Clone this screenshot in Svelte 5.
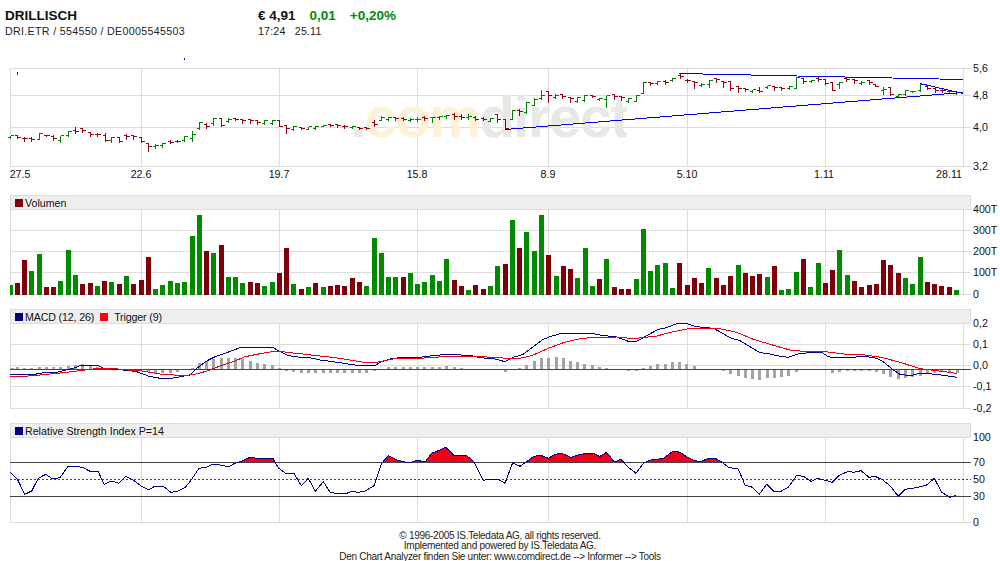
<script>
  const vGrid = [10, 141, 279, 417, 548, 687, 825, 963];

  // price bars, measured on 3x crops: [x, top, bottom, open, close]
  const priceGroups = [
    { xo: 0, yo: 0, bars: [[30,405,415,412,406],[53,405,415,407,412],[74,409,423,414,416],[95,409,423,415,417],[118,397,418,417,401],[140,404,408,405,407],[160,403,422,409,414],[181,405,428,420,407],[205,391,410,407,394],[226,379,401,390,394],[247,382,398,386,391],[271,394,410,397,403],[292,397,408,402,404],[315,397,423,405,421],[335,408,426,421,411],[358,409,426,413,423],[380,400,418,405,408],[401,402,418,407,410],[423,410,428,413,425],[445,427,455,429,440],[465,431,446,438,435],[487,427,443,436,429],[511,419,431,425,427],[533,419,428,423,425],[553,406,425,420,410],[578,390,425,414,402],[597,363,388,385,367],[618,368,385,374,378],[640,352,375,370,356],[665,352,380,354,375],[685,353,368,365,358],[705,354,361,356,358],[727,356,370,358,360],[750,355,369,359,362],[772,358,374,362,366],[793,358,373,371,362],[817,358,372,369,361],[838,360,380,361,378],[860,373,401,377,385],[880,377,392,389,380],[904,378,388,381,384],[925,378,389,387,380],[946,376,388,385,378],[970,374,380,378,375],[990,369,380,372,376],[1012,370,382,374,377],[1033,374,385,378,380],[1058,376,385,381,380],[1078,378,388,381,384],[1100,378,388,382,384],[1123,357,378,368,372],[1144,345,362,360,352],[1166,348,362,358,353],[1187,350,361,353,356],[1210,348,360,354,358],[1232,352,365,360,358],[1253,350,364,358,357]] },
    { xo: 420, yo: 60, bars: [[14,165,180,173,175],[37,168,188,173,171],[57,167,178,173,170],[80,162,175,169,165],[102,158,177,163,170],[125,160,177,170,173],[145,160,177,172,170],[167,165,182,172,177],[189,168,182,175,178],[211,173,185,184,176],[232,162,188,163,178],[255,177,207,179,205],[276,147,178,177,150],[298,145,165,150,153],[319,124,160,158,127],[343,113,136,135,117],[364,88,118,115,105],[385,93,128,95,106],[407,100,115,112,106],[428,100,116,102,108],[450,108,127,112,116],[472,110,127,125,113],[494,104,124,122,107],[516,104,112,106,108],[538,112,120,118,115],[560,105,143,118,107],[582,100,118,103,108],[604,105,120,110,113],[626,113,127,124,116],[648,102,125,123,106],[670,65,101,100,68],[690,64,75,66,71],[712,60,72,69,65],[736,58,72,64,66],[758,52,65,62,55],[780,40,55,47,50],[802,54,66,60,62],[824,63,85,65,68],[845,68,80,77,72],[867,57,82,73,60],[888,52,67,55,58]] },
    { xo: 700, yo: 60, bars: [[70,60,82,64,67],[92,63,90,65,85],[115,78,98,80,84],[137,82,95,85,89],[157,87,98,93,89],[179,78,96,92,94],[201,75,85,81,77],[223,75,90,80,83],[245,78,90,82,84],[267,77,87,84,80],[289,48,86,85,51],[311,52,70,56,64],[333,58,68,65,62],[354,50,63,54,57],[376,55,73,58,70],[398,65,92,66,91],[418,65,86,72,67],[440,52,65,56,58],[462,55,70,59,62],[485,62,73,70,66],[507,60,72,62,68],[527,70,80,72,78],[549,78,104,90,87],[571,80,106,83,104],[594,99,112,108,102],[615,88,107,102,91],[637,90,98,95,93],[661,70,93,90,72],[683,76,88,80,85],[705,82,97,85,90],[727,85,98,90,92],[749,90,100,95,93],[770,95,102,99,96]] }
  ];

  const priceBars = priceGroups.flatMap((g) =>
    g.bars.map(([x, t, b, o, c]) => {
      const px = Math.floor(g.xo + x / 3) + 0.5;
      const y = (v) => Math.floor(g.yo + v / 3) + 0.5;
      return {
        d: `M${px} ${y(t)}V${y(b)}M${px - 3} ${y(o)}H${px}M${px} ${y(c)}H${px + 3}`,
        up: c < o
      };
    })
  );

  // volume bars: [x, top, green?]
  const volumeGroups = [
    { xo: 0, bars: [[30,285,1],[45,279,0],[66,210,0],[87,243,1],[111,192,1],[132,291,0],[153,291,0],[174,273,1],[198,180,1],[219,255,1],[240,282,0],[264,279,0],[285,288,1],[306,273,0],[327,276,1],[351,282,0],[372,258,1],[393,282,0],[417,270,0],[438,201,0],[459,297,1],[480,285,1],[504,273,1],[525,279,1],[546,276,1],[570,138,1],[591,75,1],[612,183,0],[633,189,1],[657,165,0],[678,261,1],[699,261,1],[720,279,1],[744,276,0],[765,279,0],[786,288,1],[810,276,1],[831,249,0],[852,174,0],[873,282,1],[897,297,0],[918,291,1],[939,279,0],[963,291,1],[984,288,0],[1005,285,0]] },
    { xo: 330, bars: [[36,288,0],[60,264,0],[81,276,0],[102,288,1],[126,144,1],[147,189,1],[168,261,1],[189,261,1],[213,261,0],[234,249,1],[255,282,1],[276,276,1],[300,255,1],[321,273,1],[342,207,1],[366,270,0],[387,288,0],[408,300,1],[429,285,0],[453,297,0],[474,288,1],[495,228,1],[519,222,0],[540,90,1],[561,174,0],[582,126,1],[606,183,1],[627,75,1],[648,195,0],[672,258,1],[693,228,0],[714,237,0],[735,264,1],[759,174,1],[780,288,1],[801,267,0],[822,207,1],[846,291,0],[867,297,0],[888,297,0],[912,267,1],[933,117,1],[954,243,1],[975,225,1]] },
    { xo: 660, bars: [[9,219,1],[30,294,1],[51,219,0],[75,285,0],[96,264,0],[117,279,0],[138,234,1],[162,264,0],[183,285,0],[204,258,0],[228,225,1],[249,249,0],[270,258,0],[291,252,0],[315,261,1],[336,228,0],[357,300,1],[378,297,1],[402,246,1],[423,207,0],[444,291,1],[468,219,1],[489,279,0],[510,240,0],[531,180,1],[555,255,1],[576,273,0],[597,291,0],[621,285,0],[642,282,0],[663,210,0],[684,225,0],[708,249,0],[729,264,1],[750,282,1],[774,201,1],[795,276,0],[816,282,0],[837,288,0],[861,291,0],[882,300,1]] }
  ];

  const volumeBars = volumeGroups.flatMap((g) =>
    g.bars.map(([x, t, up]) => {
      const top = Math.round(190 + t / 3);
      return { x: Math.round(g.xo + x / 3), y: top, h: 295 - top, up: !!up };
    })
  );

  // MACD histogram: [x on the 3x scale, value]
  const histogram = [[33,5],[48,7],[69,5],[90,4],[114,7],[135,7],[156,7],[177,7],[201,10],[222,13],[243,16],[267,10],[288,6],[309,3],[330,2],[354,1],[375,1],[396,-2],[420,-4],[441,-8],[462,-12],[483,-11],[507,-11],[528,-8],[573,4],[594,18],[615,24],[636,32],[660,34],[681,34],[702,34],[723,31],[747,25],[768,19],[789,16],[813,13],[834,4],[855,-7],[876,-10],[900,-11],[921,-11],[942,-11],[966,-11],[987,-11],[1008,-11],[1029,-11],[1053,-11],[1074,-11],[1095,-11],[1119,-7],[1161,6],[1182,6],[1206,6],[1227,6],[1248,6],[1269,6],[1293,6],[1314,6],[1335,9],[1359,6],[1380,3],[1446,-4],[1467,-4],[1488,-3],[1512,-8],[1554,4],[1575,13],[1599,25],[1620,34],[1641,34],[1665,37],[1686,34],[1707,25],[1728,22],[1749,16],[1773,13],[1794,7],[1815,4],[1860,-4],[1881,-6],[1905,-7],[1926,4],[1947,10],[1968,16],[1992,16],[2013,22],[2034,22],[2055,16],[2079,10],[2166,-7],[2187,-16],[2211,-22],[2232,-28],[2253,-31],[2274,-34],[2298,-28],[2319,-28],[2340,-25],[2361,-22],[2385,-10],[2406,-4],[2493,-13],[2514,-10],[2538,-5],[2559,-5],[2580,-5],[2604,-5],[2625,-10],[2646,-16],[2667,-25],[2691,-31],[2712,-28],[2733,-25],[2757,-22],[2778,-15],[2799,-12],[2820,-10],[2844,-10],[2868,-12]];

  const histBars = histogram.map(([x, v]) => {
    const a = 305 + 193 / 3;
    const b = 305 + (193 - v) / 3;
    return { x: Math.round(x / 3), y: Math.round(Math.min(a, b)), h: Math.max(1, Math.round(Math.abs(v) / 3)) };
  });

  const macdBlue = [[30,209],[105,208],[130,203],[170,202],[195,196],[225,188],[240,182],[295,182],[310,189],[350,194],[385,196],[410,200],[445,213],[480,220],[520,219],[570,210],[590,190],[620,168],[645,155],[680,143],[720,128],[820,128],[835,137],[860,150],[880,155],[930,158],[960,165],[1000,170],[1050,178],[1070,181],[1125,182],[1140,172],[1170,162],[1190,159],[1260,157],[1270,155],[1330,149],[1370,149],[1415,152],[1440,158],[1480,161],[1500,166],[1515,170],[1540,157],[1570,148],[1600,125],[1630,103],[1650,95],[1680,86],[1780,86],[1800,90],[1850,96],[1885,109],[1910,109],[1940,92],[1975,73],[2000,68],[2030,56],[2060,56],[2090,65],[2140,70],[2165,83],[2190,98],[2220,107],[2280,143],[2300,145],[2330,152],[2365,157],[2400,145],[2465,142],[2485,155],[2500,158],[2600,155],[2630,160],[2650,170],[2680,195],[2700,208],[2730,212],[2760,205],[2810,208],[2870,217]];

  const macdRed = [[30,216],[100,212],[130,209],[190,203],[230,198],[255,195],[285,191],[345,191],[370,194],[420,197],[480,207],[550,212],[585,208],[625,197],[660,183],[700,170],[735,155],[780,146],[830,138],[870,143],[900,146],[960,153],[1020,160],[1090,172],[1130,172],[1180,162],[1260,160],[1330,155],[1410,154],[1460,156],[1500,157],[1520,161],[1560,160],[1595,152],[1640,132],[1690,113],[1730,103],[1780,97],[1850,96],[1900,101],[1970,93],[2020,80],[2060,72],[2160,71],[2210,82],[2260,103],[2310,118],[2370,135],[2420,140],[2475,140],[2540,148],[2590,149],[2650,158],[2710,175],[2760,191],[2810,197],[2870,205]];

  const rsi = [[30,172],[52,192],[74,238],[95,228],[115,190],[137,178],[158,192],[180,188],[204,154],[235,155],[250,158],[270,169],[295,170],[312,208],[335,198],[357,205],[378,184],[400,195],[422,212],[445,224],[465,214],[490,214],[513,232],[535,228],[555,218],[572,197],[597,160],[620,157],[638,148],[660,150],[685,155],[705,145],[725,138],[750,127],[780,131],[820,132],[835,158],[855,174],[882,175],[904,212],[925,190],[946,229],[970,200],[990,231],[1005,235],[1040,235],[1055,229],[1075,232],[1095,228],[1122,212],[1145,145],[1165,122],[1190,135],[1215,141],[1235,141],[1252,136],[1275,141],[1295,115],[1315,107],[1337,97],[1362,121],[1400,122],[1422,140],[1450,196],[1465,193],[1495,193],[1515,205],[1538,143],[1560,154],[1578,141],[1600,125],[1620,120],[1645,130],[1665,118],[1685,115],[1712,127],[1735,120],[1755,116],[1780,115],[1800,124],[1820,112],[1843,141],[1863,133],[1885,157],[1908,175],[1930,145],[1947,136],[1970,133],[1990,130],[2020,108],[2040,112],[2060,125],[2080,136],[2100,140],[2122,132],[2145,129],[2168,143],[2185,157],[2215,162],[2235,210],[2255,216],[2278,238],[2300,208],[2322,229],[2343,229],[2365,217],[2390,181],[2410,184],[2433,199],[2453,190],[2475,196],[2497,202],[2518,181],[2545,169],[2560,172],[2583,167],[2607,187],[2625,184],[2648,195],[2670,212],[2695,244],[2715,223],[2735,220],[2755,217],[2780,210],[2803,190],[2825,232],[2850,247],[2868,241]];

  const scaled = (pts, yo) => pts.map(([x, y]) => `${(x / 3).toFixed(1)},${(yo + y / 3).toFixed(1)}`).join(' ');
  const macdBluePts = scaled(macdBlue, 305);
  const macdRedPts = scaled(macdRed, 305);
  const rsiPts = scaled(rsi, 415);
  const rsiFill = `10,600 ${rsiPts} 956,600`;

  const priceDates = [[20,'27.5'],[141,'22.6'],[279,'19.7'],[417,'15.8'],[548,'8.9'],[687,'5.10'],[824,'1.11'],[949,'28.11']];
  const priceAxis = [[68,'5,6'],[95,'4,8'],[127,'4,0'],[166,'3,2']];
  const volumeAxis = [[209,'400T'],[230,'300T'],[251,'200T'],[272,'100T'],[294,'0']];
  const macdAxis = [[323,'0,2'],[344,'0,1'],[365,'0,0'],[386,'-0,1'],[408,'-0,2']];
  const rsiAxis = [[437,'100'],[462,'70'],[479,'50'],[496,'30'],[522,'0']];
</script>

<div class="page">
  <header class="top">
    <div class="names">
      <div class="title">DRILLISCH</div>
      <div class="sub wide">DRI.ETR / 554550 / DE0005545503</div>
    </div>
    <div class="quote">
      <div class="quote-row">
        <span class="title">€ 4,91</span>
        <span class="title up">0,01</span>
        <span class="title up">+0,20%</span>
      </div>
      <div class="sub">17:24&nbsp;&nbsp; 25.11</div>
    </div>
  </header>

  <svg class="plot price" viewBox="10 56 990 130" aria-label="Kurs">
    <defs>
      <clipPath id="wm"><rect x="345" y="60" width="282" height="110" /></clipPath>
    </defs>
    {#each [68, 95, 127, 166] as y}
      <line class="grid" x1="10" x2="971" y1={y + 0.5} y2={y + 0.5} />
    {/each}
    {#each vGrid as x}
      <line class="grid" x1={x + 0.5} x2={x + 0.5} y1="68" y2="167" />
    {/each}
    <g clip-path="url(#wm)">
      <text class="wm" x="350" y="137"><tspan class="wm-g">.</tspan><tspan class="wm-o">com</tspan><tspan class="wm-g">direct</tspan></text>
    </g>
    <rect class="blue-dot" x="184" y="58" width="1" height="2" />
    <rect class="blue-dot" x="17" y="72" width="1" height="3" />
    {#each priceBars as b}
      <path d={b.d} class={b.up ? 'bar up' : 'bar down'} />
    {/each}
    <polyline class="trend" points="679,73.5 963,79.5" />
    <polyline class="trend" points="505,129.5 963,92.5" />
    <polyline class="trend" points="920,83.5 963,93.5" />
    {#each priceDates as [x, t]}
      <text class="axis mid" x={x} y="178">{t}</text>
    {/each}
    {#each priceAxis as [y, t]}
      <text class="axis" x="973" y={y + 4}>{t}</text>
    {/each}
  </svg>

  <div class="legend first">
    <span class="sq maroon"></span><span>Volumen</span>
  </div>
  <svg class="plot vol" viewBox="10 209 990 90" aria-label="Volumen">
    {#each [209, 230, 251, 272, 294] as y}
      <line class="grid" x1="10" x2="971" y1={y + 0.5} y2={y + 0.5} />
    {/each}
    {#each vGrid as x}
      <line class="grid" x1={x + 0.5} x2={x + 0.5} y1="209" y2="295" />
    {/each}
    {#each volumeBars as b}
      <rect class={b.up ? 'fill-up' : 'fill-down'} x={b.x} y={b.y} width={b.x < 13 ? 3 : 5} height={b.h} />
    {/each}
    {#each volumeAxis as [y, t]}
      <text class="axis" x="973" y={y + 4}>{t}</text>
    {/each}
  </svg>

  <div class="legend second">
    <span class="sq navy"></span><span>MACD (12, 26)</span>
    <span class="sq red"></span><span>Trigger (9)</span>
  </div>
  <svg class="plot ind" viewBox="10 323 990 88" aria-label="MACD">
    {#each [323, 344, 365, 386, 408] as y}
      <line class="grid" x1="10" x2="971" y1={y + 0.5} y2={y + 0.5} />
    {/each}
    {#each vGrid as x}
      <line class="grid" x1={x + 0.5} x2={x + 0.5} y1="323" y2="409" />
    {/each}
    {#each histBars as b}
      <rect class="hist" x={b.x} y={b.y} width="3" height={b.h} />
    {/each}
    <line class="ref" x1="10" x2="971" y1="369.5" y2="369.5" />
    <polyline class="line navy-line" points={macdBluePts} />
    <polyline class="line red-line" points={macdRedPts} />
    {#each macdAxis as [y, t]}
      <text class="axis" x="973" y={y + 4}>{t}</text>
    {/each}
  </svg>

  <div class="legend third">
    <span class="sq navy"></span><span>Relative Strength Index P=14</span>
  </div>
  <svg class="plot ind" viewBox="10 437 990 88" aria-label="RSI">
    <defs>
      <clipPath id="over70"><rect x="10" y="437" width="961" height="25" /></clipPath>
    </defs>
    {#each [437, 522] as y}
      <line class="grid" x1="10" x2="971" y1={y + 0.5} y2={y + 0.5} />
    {/each}
    {#each vGrid as x}
      <line class="grid" x1={x + 0.5} x2={x + 0.5} y1="437" y2="523" />
    {/each}
    <polygon class="rsi-fill" clip-path="url(#over70)" points={rsiFill} />
    <line class="ref" x1="10" x2="971" y1="462.5" y2="462.5" />
    <line class="ref dash" x1="10" x2="971" y1="479.5" y2="479.5" />
    <line class="ref" x1="10" x2="971" y1="496.5" y2="496.5" />
    <polyline class="line navy-line" points={rsiPts} />
    {#each rsiAxis as [y, t]}
      <text class="axis" x="973" y={y + 4}>{t}</text>
    {/each}
  </svg>

  <footer class="foot">
    <div>© 1996-2005 IS.Teledata AG, all rights reserved.</div>
    <div>Implemented and powered by IS.Teledata AG.</div>
    <div>Den Chart Analyzer finden Sie unter: www.comdirect.de --&gt; Informer --&gt; Tools</div>
  </footer>
</div>

<style>
  :global(body) {
    margin: 0;
    background: #fff;
  }
  .page {
    width: 1000px;
    height: 561px;
    overflow: hidden;
    font-family: "Liberation Sans", Arial, sans-serif;
    color: #111;
  }
  .top {
    display: flex;
    height: 56px;
    box-sizing: border-box;
    padding: 8px 0 0 5px;
  }
  .names {
    width: 253px;
  }
  .title {
    font-size: 13.5px;
    font-weight: 700;
    line-height: 15px;
  }
  .sub {
    margin-top: 2px;
    font-size: 10.67px;
    line-height: 13px;
    letter-spacing: 0.16px;
    color: #222;
  }
  .sub.wide {
    letter-spacing: 0.32px;
  }
  .quote-row {
    display: flex;
    gap: 14px;
  }
  .up {
    color: #008a00;
  }
  .plot {
    display: block;
    margin-left: 10px;
    width: 990px;
    overflow: visible;
  }
  .price {
    height: 130px;
  }
  .vol {
    height: 90px;
  }
  .ind {
    height: 88px;
  }
  .legend {
    display: flex;
    align-items: center;
    box-sizing: border-box;
    margin-left: 10px;
    width: 961px;
    height: 14px;
    padding-left: 4px;
    background: #eeeeee;
    border: 1px solid #dcdcdc;
    border-bottom: 0;
    font-size: 10.67px;
    color: #111;
  }
  .legend.first {
    margin-top: 9px;
  }
  .legend.second {
    margin-top: 10px;
    letter-spacing: -0.15px;
  }
  .legend.third {
    margin-top: 12px;
  }
  .sq {
    width: 8px;
    height: 8px;
    margin-right: 2px;
  }
  .sq.red {
    margin-left: 6px;
    margin-right: 6px;
  }
  .maroon {
    background: #7f0008;
  }
  .navy {
    background: #000080;
  }
  .red {
    background: #ff0010;
  }
  .grid {
    stroke: #dcdcdc;
    stroke-width: 1;
  }
  .bar {
    fill: none;
    stroke-width: 1;
    shape-rendering: crispEdges;
  }
  .bar.up {
    stroke: #008000;
  }
  .bar.down {
    stroke: #9a0010;
  }
  .fill-up {
    fill: #008a00;
  }
  .fill-down {
    fill: #7f0008;
  }
  .hist {
    fill: #a3a3a3;
  }
  .ref {
    stroke: #444;
    stroke-width: 1;
  }
  .ref.dash {
    stroke-dasharray: 2 2;
  }
  .line {
    fill: none;
    stroke-width: 1;
    shape-rendering: crispEdges;
  }
  .navy-line {
    stroke: #000090;
  }
  .red-line {
    stroke: #f00018;
  }
  .trend {
    fill: none;
    stroke: #0000f0;
    stroke-width: 1;
    shape-rendering: crispEdges;
  }
  .blue-dot {
    fill: #0000ff;
  }
  .rsi-fill {
    fill: #f00018;
  }
  .axis {
    font-size: 10.67px;
    fill: #111;
  }
  .mid {
    text-anchor: middle;
  }
  .wm {
    font-family: "Liberation Sans", Arial, sans-serif;
    font-size: 58px;
    font-weight: 700;
    letter-spacing: -1.5px;
  }
  .wm-o {
    fill: #fdf1d8;
  }
  .wm-g {
    fill: #e8e8e4;
  }
  .foot {
    margin-top: 5.5px;
    text-align: center;
    font-size: 10px;
    line-height: 10.5px;
    letter-spacing: -0.28px;
    color: #222;
  }
</style>
